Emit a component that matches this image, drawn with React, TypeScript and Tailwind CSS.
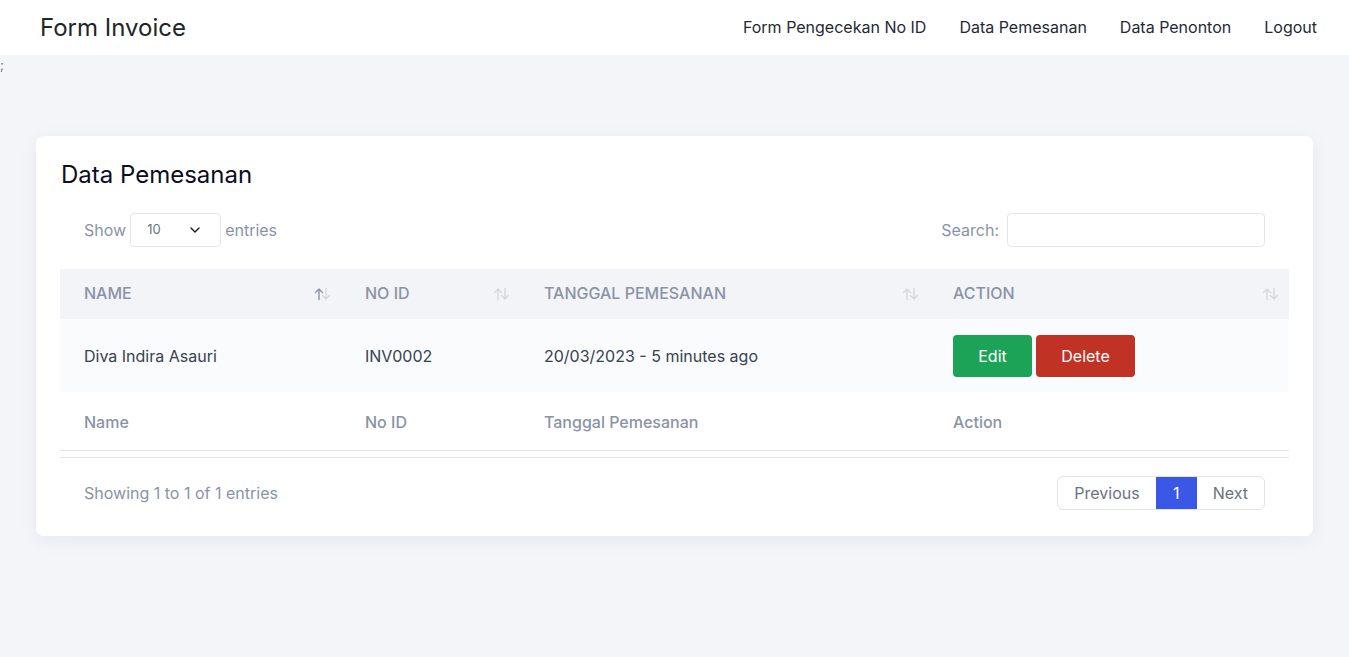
import { ChevronDown } from 'lucide-react'

const COLUMNS = [
  { key: 'name', head: 'NAME', foot: 'Name', width: 'w-[281px]', active: true },
  { key: 'id', head: 'NO ID', foot: 'No ID', width: 'w-[179px]', active: false },
  { key: 'date', head: 'TANGGAL PEMESANAN', foot: 'Tanggal Pemesanan', width: 'w-[409px]', active: false },
  { key: 'action', head: 'ACTION', foot: 'Action', width: '', active: false },
]

function SortIcon({ active }: { active: boolean }) {
  return (
    <svg width="20" height="14" viewBox="0 0 20 14" fill="none" strokeWidth="1.4" strokeLinecap="round" strokeLinejoin="round">
      <g stroke={active ? '#8d95a8' : '#d3d7df'}>
        <path d="M6 12.5V2M2.5 5.5L6 2l3.5 3.5" />
      </g>
      <g stroke="#d3d7df">
        <path d="M13 1.5V12M9.5 8.5L13 12l3.5-3.5" />
      </g>
    </svg>
  )
}

export default function App() {
  return (
    <div className="min-h-screen bg-[#f4f5f9] font-['Inter',sans-serif] text-[#374151]">
      <nav className="h-[55px] bg-white flex items-center justify-between pl-10 pr-8">
        <span className="text-[24px] text-[#212529]">Form Invoice</span>
        <div className="flex items-center gap-[33px] text-[16px] text-[#1f2937] -mt-0.5">
          <a>Form Pengecekan No ID</a>
          <a>Data Pemesanan</a>
          <a>Data Penonton</a>
          <a>Logout</a>
        </div>
      </nav>
      <div className="text-[13px] text-gray-500 leading-none pt-1 h-[81px]">;</div>

      <div className="mx-9 bg-white rounded-lg shadow-[0_4px_20px_rgba(30,40,80,0.06)] px-6 pt-6 pb-[26px]">
        <h2 className="text-[24px] text-[#0b0d21] leading-[30px] ml-px">Data Pemesanan</h2>

        <div className="flex items-center justify-between mt-[23px] px-6 text-[16px] text-[#8a93a6]">
          <div className="flex items-center gap-1">
            <span>Show</span>
            <div className="w-[91px] h-[34px] border border-[#e5e7eb] rounded flex items-center justify-between pl-4 pr-[17px] text-[13px] text-[#6b7280]">
              <span>10</span>
              <ChevronDown size={16} strokeWidth={2} className="text-[#111827]" />
            </div>
            <span>entries</span>
          </div>
          <div className="flex items-center gap-2">
            <span>Search:</span>
            <div className="w-[258px] h-[34px] border border-[#e5e7eb] rounded" />
          </div>
        </div>

        <table className="w-full mt-[22px] border-collapse text-left text-[16px]">
          <thead>
            <tr className="bg-[#f3f4f8] h-[50px]">
              {COLUMNS.map((c) => (
                <th key={c.key} className={`${c.width} font-medium text-[#8a93a6] pl-6 pr-2 align-middle`}>
                  <div className="flex items-center justify-between">
                    <span className="-mt-0.5">{c.head}</span>
                    <SortIcon active={c.active} />
                  </div>
                </th>
              ))}
            </tr>
          </thead>
          <tbody>
            <tr className="bg-[#fafbfc] h-[73px]">
              <td className="pl-6">Diva Indira Asauri</td>
              <td className="pl-6">INV0002</td>
              <td className="pl-6">20/03/2023 - 5 minutes ago</td>
              <td className="pl-6">
                <div className="flex gap-1">
                  <button className="w-[79px] h-[42px] rounded bg-[#1ca358] text-white">Edit</button>
                  <button className="w-[99px] h-[42px] rounded bg-[#c03223] text-white">Delete</button>
                </div>
              </td>
            </tr>
          </tbody>
          <tfoot>
            <tr className="h-[58px] border-b border-[#e5e7eb]">
              {COLUMNS.map((c) => (
                <td key={c.key} className="pl-6 font-medium text-[#8a93a6] pt-[2px]">
                  {c.foot}
                </td>
              ))}
            </tr>
          </tfoot>
        </table>
        <div className="border-t border-[#e5e7eb] mt-[6px]" />

        <div className="flex items-center justify-between mt-[18px] pl-6 pr-6 text-[16px] text-[#8a93a6]">
          <span>Showing 1 to 1 of 1 entries</span>
          <div className="flex h-[34px] border border-[#e0e3e9] rounded-md overflow-hidden text-[#6b7280]">
            <span className="px-4 flex items-center">Previous</span>
            <span className="w-[41px] flex items-center justify-center bg-[#3b57e6] text-white">1</span>
            <span className="px-4 flex items-center">Next</span>
          </div>
        </div>
      </div>
    </div>
  )
}
